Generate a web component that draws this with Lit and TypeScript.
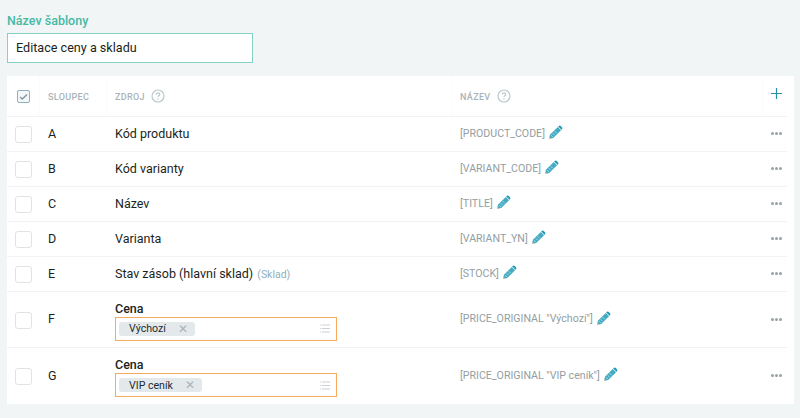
import { LitElement, html, css } from "lit";
import { customElement } from "lit/decorators.js";

const pencil = html`<svg class="pencil" width="15" height="15" viewBox="0 0 15 15"><path d="M1 14l.9-4.2L9.8 1.9l3.3 3.3-7.9 7.9z" fill="#44abc2"/><path d="M10.6 1.1c.7-.7 1.6-.7 2.2 0l1.1 1.1c.6.6.6 1.5 0 2.2l-.4.4-3.3-3.3z" fill="#1f9ab4"/><path d="M3 10.2l1.9 1.9M4.7 8.2l2 2M6.7 6.2l2 2" stroke="#d7eef3" stroke-width=".7"/><path d="M1 14l.5-2.1 1.6 1.6z" fill="#e8c9a8"/></svg>`;
const help = html`<svg class="help" width="14" height="14" viewBox="0 0 14 14"><circle cx="7" cy="7" r="6" fill="none" stroke="#bcc8cc" stroke-width="1.2"/><path d="M5.2 5.4c0-1 .8-1.6 1.8-1.6s1.8.6 1.8 1.5c0 1.3-1.8 1.3-1.8 2.7" fill="none" stroke="#bcc8cc" stroke-width="1.2"/><circle cx="7" cy="10" r=".8" fill="#bcc8cc"/></svg>`;
const listIcon = html`<svg class="list" width="10" height="9" viewBox="0 0 10 9"><path d="M0 1h1M0 4.5h1M0 8h1M2 1h8M2 4.5h8M2 8h8" stroke="#c9d1d4" stroke-width="1"/></svg>`;

type Row = { col: string; src: string; extra?: string; tag?: string; name: string };
const rows: Row[] = [
  { col: "A", src: "Kód produktu", name: "[PRODUCT_CODE]" },
  { col: "B", src: "Kód varianty", name: "[VARIANT_CODE]" },
  { col: "C", src: "Název", name: "[TITLE]" },
  { col: "D", src: "Varianta", name: "[VARIANT_YN]" },
  { col: "E", src: "Stav zásob (hlavní sklad)", extra: "(Sklad)", name: "[STOCK]" },
  { col: "F", src: "Cena", tag: "Výchozí", name: '[PRICE_ORIGINAL "Výchozí"]' },
  { col: "G", src: "Cena", tag: "VIP ceník", name: '[PRICE_ORIGINAL "VIP ceník"]' },
];

@customElement("app-root")
export class AppRoot extends LitElement {
  static styles = css`
    :host { display: block; width: 800px; height: 418px; background: #f1f5f6; font-family: Roboto, sans-serif; color: #1b1f22; overflow: hidden; }
    .wrap { padding: 13px 6px 0 7px; display: flex; flex-direction: column; }
    .label { font-size: 12.5px; font-weight: 500; line-height: 15px; color: #45b9a4; margin-bottom: 5px; }
    .input { width: 246px; height: 30px; box-sizing: border-box; border: 1px solid #84d3c4; background: #fff; font-size: 12.6px; line-height: 28px; padding-left: 8px; }
    .card { margin-top: 13px; background: #fff; padding-right: 7px; }
    .row { display: flex; align-items: center; height: 35px; box-sizing: border-box; border-bottom: 1px solid #f1f3f4; font-size: 12.5px; padding-bottom: 2px; }
    .row.tall { height: 56px; }
    .row.last { border-bottom: 0; }
    .row.head { height: 41px; font-size: 9px; font-weight: 500; letter-spacing: .35px; color: #a9b3b7; padding-bottom: 0; }
    .c0 { width: 33px; flex: none; display: flex; justify-content: center; padding-left: 1px; box-sizing: border-box; }
    .c1 { width: 67px; flex: none; padding-left: 8px; box-sizing: border-box; }
    .c2 { width: 345px; flex: none; padding-left: 8px; box-sizing: border-box; }
    .c3 { flex: 1; display: flex; align-items: center; padding-left: 8px; color: #939ea2; font-size: 10.6px; }
    .c4 { width: 24px; flex: none; display: flex; justify-content: center; padding-left: 3px; box-sizing: border-box; }
    .head > div { align-self: stretch; display: flex; align-items: center; border-right: 1px solid #fafbfb; padding-top: 1px; }
    .head .c3, .head .c2, .head .c1 { font-size: 9px; color: #a9b3b7; }
    .head .c4 { border-right: 0; align-items: flex-start; padding-top: 12px; }
    .help { margin-left: 6px; margin-top: -1px; }
    .box { width: 17px; height: 17px; box-sizing: border-box; border: 1px solid #dfe3e5; border-radius: 3px; background: #fff; margin: 3px 1px 0 0; }
    .box.on { width: 13px; height: 13px; border: 1.5px solid #8fb0c0; border-radius: 2px; display: flex; align-items: center; justify-content: center; margin: 0; background: #f4f7f8; }
    .sub { color: #8fb0bc; font-size: 10.5px; margin-left: 1px; }
    .pencil { margin-left: 3px; margin-top: -1px; }
    .dots { display: flex; gap: 1px; margin-top: 1px; }
    .dots i { width: 3px; height: 3px; border-radius: 50%; background: #98a2a6; }
    .title { font-weight: 500; line-height: 15px; font-size: 12.5px; margin-top: 4px; }
    .select { width: 222px; height: 24px; box-sizing: border-box; border: 1px solid #f6ab5c; margin-top: 1px; display: flex; align-items: center; justify-content: space-between; padding: 0 6px 0 3px; }
    .tag { background: #e3e9eb; border-radius: 3px; height: 14px; display: flex; align-items: center; padding: 0 7px 0 10px; font-size: 10.6px; gap: 12px; color: #1b2a30; }
    .x { color: #a9b3b7; font-size: 12px; line-height: 14px; }
  `;

  render() {
    return html`<div class="wrap">
      <div class="label">Název šablony</div>
      <div class="input">Editace ceny a skladu</div>
      <div class="card">
        <div class="row head">
          <div class="c0"><span class="box on"><svg width="9" height="8" viewBox="0 0 9 8"><path d="M1 4l2.3 2L8 1.5" fill="none" stroke="#7f98a5" stroke-width="1.4"/></svg></span></div>
          <div class="c1">SLOUPEC</div>
          <div class="c2">ZDROJ ${help}</div>
          <div class="c3">NÁZEV ${help}</div>
          <div class="c4"><svg width="11" height="11" viewBox="0 0 11 11"><path d="M5.5 0v11M0 5.5h11" stroke="#2a8fa6" stroke-width="1.2"/></svg></div>
        </div>
        ${rows.map((r, i) => html`<div class="row ${r.tag ? "tall" : ""} ${i === rows.length - 1 ? "last" : ""}">
          <div class="c0"><span class="box"></span></div>
          <div class="c1">${r.col}</div>
          <div class="c2">${r.tag
            ? html`<div class="title">${r.src}</div><div class="select"><span class="tag">${r.tag}<span class="x">✕</span></span>${listIcon}</div>`
            : html`${r.src}${r.extra ? html` <span class="sub">${r.extra}</span>` : ""}`}</div>
          <div class="c3">${r.name}${pencil}</div>
          <div class="c4"><span class="dots"><i></i><i></i><i></i></span></div>
        </div>`)}
      </div>
    </div>`;
  }
}
